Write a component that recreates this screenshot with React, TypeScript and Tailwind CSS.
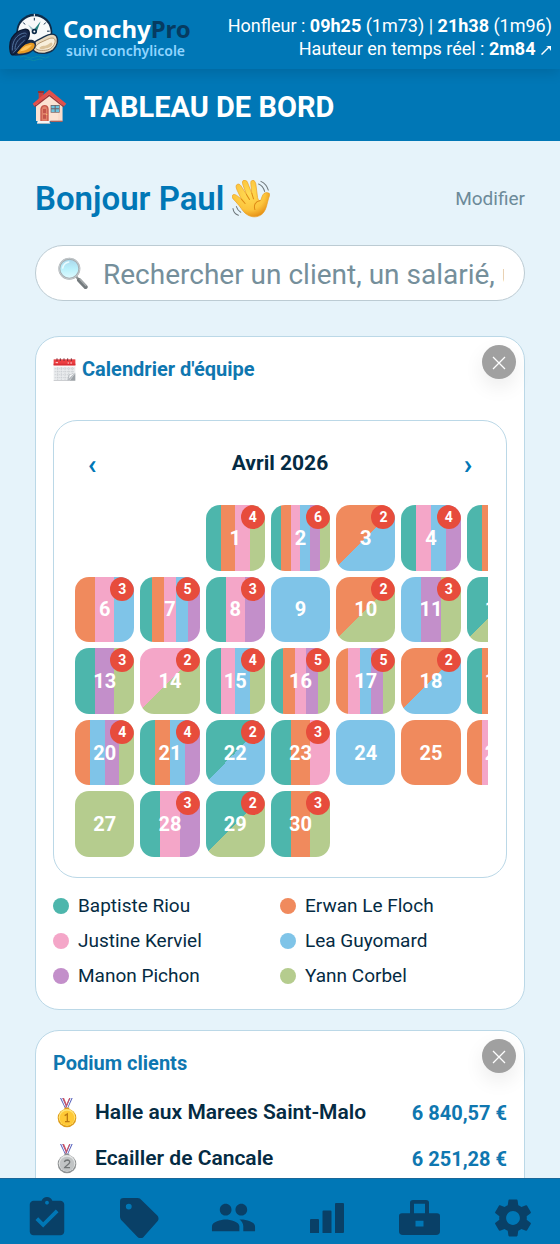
import { useState } from 'react';
import type { ReactNode } from 'react';
import { MdAssignmentTurnedIn, MdPeople, MdSettings } from 'react-icons/md';

const TEAL = '#4db6ac';
const ORANGE = '#f08a5d';
const PINK = '#f4a6c8';
const BLUE = '#7fc4e8';
const PURPLE = '#c38fca';
const GREEN = '#b5cc8e';

const team = [
  { name: 'Baptiste Riou', color: TEAL },
  { name: 'Erwan Le Floch', color: ORANGE },
  { name: 'Justine Kerviel', color: PINK },
  { name: 'Lea Guyomard', color: BLUE },
  { name: 'Manon Pichon', color: PURPLE },
  { name: 'Yann Corbel', color: GREEN },
];

// index 0 = 1er avril
const days: string[][] = [
  [TEAL, ORANGE, PINK, GREEN],
  [TEAL, ORANGE, PINK, BLUE, PURPLE, GREEN],
  [ORANGE, BLUE],
  [TEAL, PINK, BLUE, PURPLE],
  [TEAL, ORANGE, BLUE, GREEN],
  [ORANGE, PINK, BLUE],
  [TEAL, ORANGE, PINK, BLUE, PURPLE],
  [TEAL, PINK, PURPLE],
  [BLUE],
  [ORANGE, GREEN],
  [BLUE, PURPLE, GREEN],
  [TEAL, GREEN],
  [TEAL, PURPLE, GREEN],
  [PINK, GREEN],
  [TEAL, PINK, BLUE, GREEN],
  [TEAL, ORANGE, PINK, PURPLE, GREEN],
  [ORANGE, PINK, BLUE, PURPLE, GREEN],
  [ORANGE, BLUE],
  [TEAL, ORANGE, PINK, BLUE],
  [ORANGE, BLUE, PURPLE, GREEN],
  [TEAL, ORANGE, BLUE, PURPLE],
  [TEAL, BLUE],
  [TEAL, ORANGE, PINK],
  [BLUE],
  [ORANGE],
  [ORANGE, PINK, PURPLE, GREEN],
  [GREEN],
  [TEAL, PINK, PURPLE],
  [TEAL, GREEN],
  [TEAL, ORANGE, GREEN],
];

const podium = [
  { name: 'Halle aux Marees Saint-Malo', amount: '6 840,57 €', medal: 'gold' },
  { name: 'Ecailler de Cancale', amount: '6 251,28 €', medal: 'silver' },
];

function dayBackground(colors: string[]) {
  if (colors.length === 1) return colors[0];
  const step = 100 / colors.length;
  const stops = colors.map((c, i) => `${c} ${i * step}% ${(i + 1) * step}%`).join(', ');
  return `linear-gradient(${colors.length === 2 ? 135 : 90}deg, ${stops})`;
}

function Logo() {
  return (
    <svg viewBox="25 38 150 152" className="mt-1 h-[51px] w-[50px] shrink-0" aria-hidden="true">
      <path d="M58 170q12-6 22 0t22 0 22 0 22-2M72 178q10-5 18 0t18 0 18 0" fill="none" stroke="#0b8aa8" strokeWidth="3" />
      <circle cx="101" cy="94" r="54" fill="#0d2b49" />
      <circle cx="101" cy="96" r="49" fill="#f7f9fa" />
      <path d="M101 52v8M68 66l5 6M135 66l-5 6M56 92h8M139 92h8" stroke="#0d2b49" strokeWidth="3" />
      <path d="M101 40v8" stroke="#fff" strokeWidth="3" />
      <path d="m120 62-13 34-11-4z" fill="#25807f" />
      <path d="m82 72 14 22 9-4z" fill="#9fc0c9" />
      <circle cx="101" cy="93" r="8" fill="#0d2b49" />
      <circle cx="101" cy="93" r="3" fill="#fff" />
      <path d="M96 138c3-18 18-20 32-28 12-7 31-14 39-3 8 12 2 30-9 41-13 12-40 14-54 6-7-4-9-10-8-16z" fill="#e9d9bd" stroke="#17304b" strokeWidth="4" />
      <path d="M104 140c6-13 20-15 33-22 12-6 23-8 26 0 3 11-9 27-22 30-14 3-36 3-37-8z" fill="#f8efdc" stroke="#b59873" strokeWidth="3" />
      <path d="M116 142c8-9 18-4 26-10s10-8 13-4c2 8-10 15-18 15-7 2-20 6-21-1z" fill="#dcc39b" />
      <path d="M32 160c10-20 24-34 48-41 15-4 26 1 26 13 0 17-20 31-42 32-14 1-30 4-32-4z" fill="#152a49" />
      <path d="M49 156c9-14 20-24 36-28 12-3 18 1 17 8-2 13-17 20-32 22-9 1-19 4-21-2z" fill="#e69a25" />
      <path d="M57 153c11-15 22-19 37-20-9 13-20 18-37 20z" fill="#ffc65c" />
      <path d="M29 155c-5-25 2-47 21-60 13-9 31-13 35-2 5 18-7 31-20 43-11 10-23 31-31 27-3-1-4-4-5-8z" fill="#17274a" stroke="#0b1a33" strokeWidth="4" />
      <path d="M35 150c-1-22 8-40 23-48 9-5 18-6 20-1M43 147c0-17 8-29 19-36 6-4 11-6 14-4M38 156c12-9 14-21 34-37" fill="none" stroke="#52739f" strokeWidth="3" />
    </svg>
  );
}

function House() {
  return (
    <svg viewBox="0 0 105 105" className="size-[35px] shrink-0" aria-hidden="true">
      <path d="M12 46 52 10l39 36v50H12z" fill="#fbe3d3" />
      <path d="M52 10 91 46v50H78V40z" fill="#f9dccb" />
      <path d="M20 8h14v22L20 42z" fill="#c9413f" />
      <path d="M18 6h18v6H18z" fill="#8f3336" />
      <path d="M52 2 2 44l5 8 45-36 44 36 7-8z" fill="#e2504b" />
      <path d="M52 16 7 52l2 3 43-33 42 33 2-3z" fill="#9f3438" />
      <path d="M25 96V60q2-12 13-12t12 12v36z" fill="#c4564a" />
      <path d="M29 95V61q2-9 9-9t8 9v34z" fill="#e1826b" />
      <path d="M33 60h9v12h-9zM33 77h9v12h-9z" fill="#c4564a" />
      <circle cx="44" cy="76" r="2" fill="#ffd36b" />
      <path d="M56 48h27v23H56z" fill="#725f62" />
      <path d="M58 50h10v8H58zM71 50h10v8H71zM58 61h10v8H58zM71 61h10v8H71z" fill="#6bc3df" />
      <path d="M17 96h36v7H15z" fill="#f4f5f6" />
      <path d="M15 102h40v3H15z" fill="#a9b7c0" />
      <path d="M55 95h37v4H55z" fill="#a7605b" />
    </svg>
  );
}

function WavingHand() {
  return (
    <svg viewBox="0 0 113 113" className="size-[38px] shrink-0" aria-hidden="true">
      <defs>
        <radialGradient id="hand" cx="45%" cy="38%" r="66%">
          <stop offset="0" stopColor="#ffdc55" />
          <stop offset=".65" stopColor="#fcc43c" />
          <stop offset="1" stopColor="#e48b12" />
        </radialGradient>
      </defs>
      <path
        d="M27 84C20 74 11 64 4 57c-5-5-5-11-1-13 5-3 10 1 15 5l10 8L15 30c-4-9-4-15 1-17 5-3 10 2 13 8l14 22L33 16c-3-8-3-14 3-16 6-1 10 5 12 12l11 28-3-27c-1-8 1-12 6-12s8 5 9 12l5 39c2 8 5 11 8 9 4-3 4-11 8-17 4-7 11-8 17-5 6 2 2 9 0 15-5 15-6 33-17 45-15 16-46 16-65-15z"
        fill="url(#hand)"
        stroke="#eba023"
        strokeWidth="2"
      />
      <path d="m28 57 11 13M43 43l9 15M59 40l5 16M84 61c-15 3-20 13-16 27" fill="none" stroke="#dd8a16" strokeWidth="3" strokeLinecap="round" />
      <path d="M79 12q13 5 18 22M86 4q17 8 22 26M3 85q2 15 16 20M13 79q4 12 13 17" fill="none" stroke="#6f777b" strokeWidth="3" strokeLinecap="round" />
    </svg>
  );
}

function Magnifier() {
  return (
    <svg viewBox="0 0 90 96" className="h-8 w-[30px] shrink-0" aria-hidden="true">
      <defs>
        <linearGradient id="lens" x1="0" y1="0" x2="0" y2="1">
          <stop offset="0" stopColor="#a9d6ea" />
          <stop offset=".5" stopColor="#b9f0fb" />
          <stop offset="1" stopColor="#e0fbff" />
        </linearGradient>
      </defs>
      <path d="m55 59 9 11" stroke="#929799" strokeWidth="7" />
      <path d="m63 69 20 21" stroke="#747b7e" strokeWidth="12" strokeLinecap="round" />
      <path d="m66 67 18 19" stroke="#a7abad" strokeWidth="4" strokeLinecap="round" />
      <circle cx="34" cy="35" r="30" fill="url(#lens)" stroke="#a4acb0" strokeWidth="6" />
      <circle cx="34" cy="35" r="31" fill="none" stroke="#d7dadb" strokeWidth="2" />
      <path d="M14 33q3-15 18-18" fill="none" stroke="#e9fbff" strokeWidth="5" strokeLinecap="round" />
    </svg>
  );
}

function CalendarIcon() {
  return (
    <svg viewBox="0 0 69 69" className="size-[23px] shrink-0" aria-hidden="true">
      <path d="M2 5h65v42L49 67H2z" fill="#e9ebed" />
      <path d="M2 22h65v4H2z" fill="#fff" />
      <path d="M2 4h65v18H2z" fill="#ec3f42" />
      <path d="M2 17h65v5H2z" fill="#d92e35" />
      <path d="M12 1v8M22 1v8M33 1v8M44 1v8M55 1v8" stroke="#7e3038" strokeWidth="3" />
      <path d="M8 14h7M44 15h4M52 15h5" stroke="#ffd9da" strokeWidth="3" />
      <path d="M5 32h59M5 41h59M5 50h50M5 59h42M14 27v39M25 27v39M36 27v39M47 27v38M58 27v27" stroke="#c5c9cd" strokeWidth="2" strokeDasharray="4 2" />
      <path d="m67 44-20 6-4 17h7z" fill="#b6babf" />
      <path d="M67 43c-6 5-10 7-17 8-1 8-3 12-8 16z" fill="#f8f9fa" />
      <path d="M2 67h49L67 46v22H2z" fill="#9da2a7" />
    </svg>
  );
}

function Medal({ kind }: { kind: string }) {
  const gold = kind === 'gold';
  const rim = gold ? '#df9d1a' : '#8f9293';
  const face = gold ? '#ffc936' : '#c1c4c5';
  const shine = gold ? '#ffe477' : '#e3e5e5';
  const mark = gold ? '#bd7910' : '#717576';

  return (
    <svg viewBox="0 0 60 90" className="h-[30px] w-5 shrink-0" aria-hidden="true">
      <path d="M9 0h10l14 31h-9z" fill="#5862bd" />
      <path d="m14 0 14 31" stroke="#fff" strokeWidth="3" />
      <path d="m19 0 12 29" stroke="#d9515b" strokeWidth="4" />
      <path d="M47 0H37L24 31h9z" fill="#5862bd" />
      <path d="M42 0 29 31" stroke="#fff" strokeWidth="3" />
      <path d="M38 0 26 29" stroke="#d9515b" strokeWidth="3" />
      <path d="M22 29h15v7H22z" fill={rim} />
      <circle cx="30" cy="60" r="28" fill={rim} />
      <circle cx="30" cy="58" r="25" fill={shine} />
      <circle cx="30" cy="60" r="22" fill={face} />
      {gold ? (
        <path d="m23 53 8-5v23m-7 0h14" fill="none" stroke={mark} strokeWidth="4" />
      ) : (
        <path d="M22 54q2-6 9-6 8 1 7 7c-1 6-12 10-15 16h16" fill="none" stroke={mark} strokeWidth="4" />
      )}
    </svg>
  );
}

function TagIcon() {
  return (
    <svg viewBox="0 0 40 42" className="h-10 w-[39px]" fill="currentColor" preserveAspectRatio="none" aria-hidden="true">
      <path fillRule="evenodd" d="M4 0h14c2 0 3 1 4 2l16 16c2 2 2 5 0 7L25 40c-2 3-5 3-7 1L2 24c-1-1-2-3-2-4V4c0-3 1-4 4-4zm5 6a3 3 0 1 0 0 6 3 3 0 0 0 0-6z" />
    </svg>
  );
}

function BarsIcon() {
  return (
    <svg viewBox="0 0 34 32" className="h-[30px] w-[34px]" fill="currentColor" preserveAspectRatio="none" aria-hidden="true">
      <path d="M0 18a1 1 0 0 1 1-1h7a1 1 0 0 1 1 1v14H0zM12.500 9a1 1 0 0 1 1-1h7a1 1 0 0 1 1 1v23h-9zM25 1a1 1 0 0 1 1-1h7a1 1 0 0 1 1 1v30a1 1 0 0 1-1 1h-8z" />
    </svg>
  );
}

function ToolboxIcon() {
  return (
    <svg viewBox="0 0 41 37" className="h-[35px] w-[41px]" fill="currentColor" preserveAspectRatio="none" aria-hidden="true">
      <path fillRule="evenodd" d="M11 14V3q0-3 3-3h13q3 0 3 3v11h8q3 0 3 3v16q0 4-4 4H4q-4 0-4-4V17q0-3 3-3zm4 0h11V4H15zm1.500 8v6h8v-6z" />
    </svg>
  );
}

function Card({ title, icon, children }: { title: string; icon?: ReactNode; children: ReactNode }) {
  const [open, setOpen] = useState(true);
  if (!open) return null;

  return (
    <section className="relative rounded-3xl border border-[#bbd8e7] bg-white px-[17px] pt-5 pb-[21px]">
      <h2 className="flex items-center gap-[6px] text-xl leading-6 font-bold text-[#0f77b0]">
        {icon}
        {title}
      </h2>
      <button
        onClick={() => setOpen(false)}
        aria-label={`Masquer ${title}`}
        className="absolute top-2 right-2 flex size-[34px] items-center justify-center rounded-full bg-[#a0a0a0] text-white shadow-[0_8px_20px_rgba(0,0,0,0.08)]"
      >
        <svg viewBox="0 0 14 14" className="mt-[2px] size-[14px]" stroke="currentColor" strokeWidth="1.300" aria-hidden="true">
          <path d="m1 1 12 12M13 1 1 13" />
        </svg>
      </button>
      {children}
    </section>
  );
}

export default function App() {
  const navItems = [
    { label: 'Tâches', icon: <MdAssignmentTurnedIn className="size-[46px]" /> },
    { label: 'Produits', icon: <TagIcon /> },
    { label: 'Clients', icon: <MdPeople className="size-[47px]" /> },
    { label: 'Statistiques', icon: <BarsIcon /> },
    { label: 'Matériel', icon: <ToolboxIcon /> },
    { label: 'Paramètres', icon: <MdSettings className="size-[46px]" /> },
  ];

  return (
    <div className="flex h-screen flex-col bg-[#e6f3fa] font-[Roboto,sans-serif] text-[#052b43]">
      <header className="z-10 flex h-[69px] shrink-0 items-center justify-between bg-[#0077b6] px-2 pt-1 text-white shadow-[0_4px_12px_rgba(0,0,0,0.12)]">
        <div className="flex items-center gap-1 pl-[1px]">
          <Logo />
          <div className="font-['Noto_Sans',sans-serif]">
            <p className="text-2xl leading-7 font-bold">
              Conchy<span className="text-[#063b61]">Pro</span>
            </p>
            <p className="pl-[3px] text-sm leading-4 font-semibold text-[#90d5ff]">suivi conchylicole</p>
          </div>
        </div>
        <div className="text-right text-lg leading-[23px] whitespace-nowrap">
          <p>
            Honfleur : <strong>09h25</strong> (1m73) | <strong>21h38</strong> (1m96)
          </p>
          <p>
            Hauteur en temps réel : <strong>2m84</strong>{' '}
            <svg viewBox="0 0 12 12" className="inline size-3" fill="currentColor" aria-label="en hausse">
              <path d="m1 10 7-7-2-1h5v5L9 4l-7 7z" />
            </svg>
          </p>
        </div>
      </header>

      <div className="flex h-[72px] shrink-0 items-center gap-[17px] bg-[#0077b6] px-8 pt-[3px] text-white">
        <House />
        <h1 className="text-[29px] leading-8 font-bold">TABLEAU DE BORD</h1>
      </div>

      <main className="min-h-0 flex-1 overflow-y-auto px-[35px] pt-9 [scrollbar-width:none]">
        <div className="flex items-center justify-between">
          <p className="flex items-center gap-2 text-[33px] leading-[44px] font-semibold text-[#0077b6]">
            Bonjour Paul <WavingHand />
          </p>
          <button className="text-[19px] leading-6 text-[#6c8a99]">Modifier</button>
        </div>

        <label className="mt-6 flex h-14 items-center gap-[15px] rounded-full border border-[#bccbd3] bg-white pr-5 pl-[22px]">
          <Magnifier />
          <input
            type="text"
            aria-label="Rechercher"
            placeholder="Rechercher un client, un salarié, une commande"
            className="min-w-0 flex-1 bg-transparent pt-[3px] text-[28px] leading-9 outline-none placeholder:text-[#758f9b]"
          />
        </label>

        <div className="mt-[35px] flex flex-col gap-5 pb-5">
          <Card title="Calendrier d'équipe" icon={<CalendarIcon />}>
            <div className="mt-[39px] rounded-3xl border border-[#bbd8e7] px-[18px] pt-6 pb-5">
              <div className="flex items-center justify-between">
                <button aria-label="Mois précédent" className="w-10 pt-1 text-[28px] leading-8 font-bold text-[#0077b6]">‹</button>
                <h3 className="text-[21px] leading-8 font-bold">Avril 2026</h3>
                <button aria-label="Mois suivant" className="w-10 pt-1 text-[28px] leading-8 font-bold text-[#0077b6]">›</button>
              </div>
              <div className="mt-6 overflow-hidden pl-[3px]">
                <div className="grid h-[352px] w-[451px] grid-cols-7 grid-rows-5 gap-[6px]">
                  {days.map((colors, i) => (
                    <button
                      key={i}
                      className="relative overflow-hidden rounded-[14px] text-xl font-bold text-white first:col-start-3"
                      style={{ background: dayBackground(colors) }}
                    >
                      {i + 1}
                      {colors.length > 1 && (
                        <span className="absolute top-0 right-0 flex size-6 items-center justify-center rounded-full bg-[#e74c3c] text-sm leading-6">
                          {colors.length}
                        </span>
                      )}
                    </button>
                  ))}
                </div>
              </div>
            </div>
            <ul className="mt-4 grid grid-cols-2 gap-y-[11px] text-[19px] leading-6">
              {team.map((m) => (
                <li key={m.name} className="flex items-center gap-[9px]">
                  <span className="size-4 rounded-full" style={{ background: m.color }} />
                  {m.name}
                </li>
              ))}
            </ul>
          </Card>

          <Card title="Podium clients">
            <ul className="mt-[15px]">
              {podium.map((p) => (
                <li key={p.name} className="flex h-[46px] items-center pl-1 text-xl font-bold">
                  <Medal kind={p.medal} />
                  <span className="ml-[18px] text-[21px] font-semibold">{p.name}</span>
                  <span className="ml-auto text-[#0f77b0]">{p.amount}</span>
                </li>
              ))}
            </ul>
          </Card>
        </div>
      </main>

      <nav className="grid h-[66px] shrink-0 grid-cols-6 border-t border-[#1a6799] bg-[#0077b6] pt-3 text-[#094067]">
        {navItems.map((item) => (
          <a key={item.label} href="#" aria-label={item.label} className="flex items-center justify-center">
            {item.icon}
          </a>
        ))}
      </nav>
    </div>
  );
}
